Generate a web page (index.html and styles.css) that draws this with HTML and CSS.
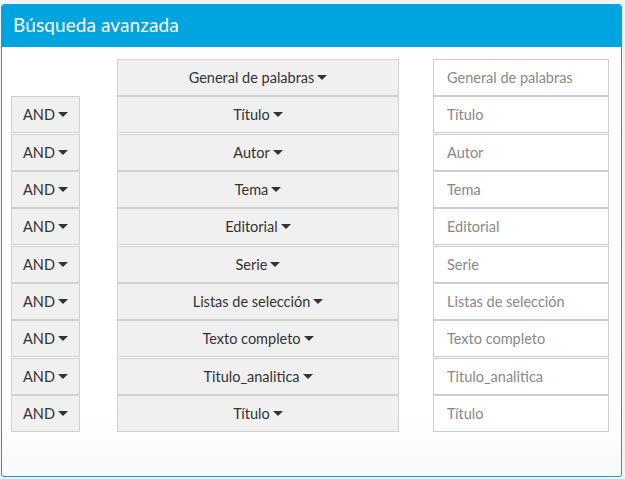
FILE: index.html
```html
<!DOCTYPE html>
<html>
<head>
<meta charset="utf-8">
<link rel="stylesheet" href="styles.css">
</head>
<body>
<div class="panel">
  <div class="panel-head">Búsqueda avanzada</div>
  <div class="panel-body">
    <div class="grid">
      <div class="op-empty"></div>
      <div class="btn field">General de palabras<span class="caret"></span></div>
      <div class="input">General de palabras</div>

      <div class="btn op">AND<span class="caret"></span></div>
      <div class="btn field">Título<span class="caret"></span></div>
      <div class="input">Título</div>

      <div class="btn op">AND<span class="caret"></span></div>
      <div class="btn field">Autor<span class="caret"></span></div>
      <div class="input">Autor</div>

      <div class="btn op">AND<span class="caret"></span></div>
      <div class="btn field">Tema<span class="caret"></span></div>
      <div class="input">Tema</div>

      <div class="btn op">AND<span class="caret"></span></div>
      <div class="btn field">Editorial<span class="caret"></span></div>
      <div class="input">Editorial</div>

      <div class="btn op">AND<span class="caret"></span></div>
      <div class="btn field">Serie<span class="caret"></span></div>
      <div class="input">Serie</div>

      <div class="btn op">AND<span class="caret"></span></div>
      <div class="btn field">Listas de selección<span class="caret"></span></div>
      <div class="input">Listas de selección</div>

      <div class="btn op">AND<span class="caret"></span></div>
      <div class="btn field">Texto completo<span class="caret"></span></div>
      <div class="input">Texto completo</div>

      <div class="btn op">AND<span class="caret"></span></div>
      <div class="btn field">Titulo_analitica<span class="caret"></span></div>
      <div class="input">Titulo_analitica</div>

      <div class="btn op">AND<span class="caret"></span></div>
      <div class="btn field">Título<span class="caret"></span></div>
      <div class="input">Título</div>
    </div>
  </div>
</div>
</body>
</html>
```

FILE: styles.css
```css
html, body {
  margin: 0;
  padding: 0;
  background: #f4f4f4;
  font-family: "Lato", "Open Sans", sans-serif;
}
body {
  padding: 4px 3px 3px 1px;
}
.panel {
  width: 621px;
  height: 473px;
  border: 1px solid #00a5df;
  border-radius: 3px;
  background: linear-gradient(to bottom, #fff 0, #fff 400px, #f7f9fa 473px);
  box-sizing: border-box;
  overflow: hidden;
}
.panel-head {
  background: #00a5df;
  color: #fff;
  height: 42px;
  box-sizing: border-box;
  padding: 8px 0 0 11px;
  font-size: 19px;
  letter-spacing: 0.1px;
}
.panel-body {
  padding: 12px 0 0 9px;
}
.grid {
  display: grid;
  grid-template-columns: 106px 316px 176px;
  grid-auto-rows: 37.33px;
}
.op { width: 69px; }
.field { width: 282px; }
.btn {
  display: flex;
  align-items: center;
  justify-content: center;
  background: #f0f0f0;
  border: 1px solid #d2d2d2;
  height: 37px;
  box-sizing: border-box;
  color: #333;
  font-size: 14.5px;
}
.caret {
  display: inline-block;
  width: 0;
  height: 0;
  margin-left: 3px;
  border-left: 5px solid transparent;
  border-right: 5px solid transparent;
  border-top: 5px solid #333;
}
.input {
  width: 176px;
  border: 1px solid #c9cdd5;
  height: 37px;
  box-sizing: border-box;
  display: flex;
  align-items: center;
  padding-left: 13px;
  color: #888;
  font-size: 14.5px;
  background: #fff;
}
```
